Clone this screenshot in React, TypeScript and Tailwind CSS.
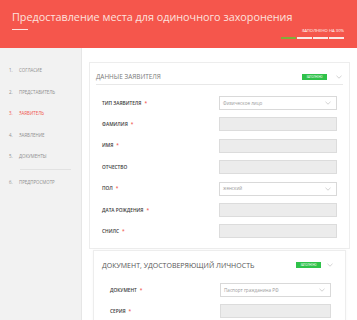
import React from "react";

const Chevron = ({ className = "" }: { className?: string }) => (
  <svg width="6" height="4" viewBox="0 0 6 4" className={className}>
    <path d="M0.5 0.8 L3 3.2 L5.5 0.8" fill="none" stroke="#b5b5b5" strokeWidth="0.6" />
  </svg>
);

const Badge = () => (
  <div className="w-[25px] h-[6px] bg-[#2fc24a] flex items-center justify-center text-white text-[2.6px] leading-none uppercase">
    заполнено
  </div>
);

type Row = { label: string; req?: boolean; kind: "select" | "input"; value?: string };

const rows1: Row[] = [
  { label: "Тип заявителя", req: true, kind: "select", value: "Физическое лицо" },
  { label: "Фамилия", req: true, kind: "input" },
  { label: "Имя", req: true, kind: "input" },
  { label: "Отчество", kind: "input" },
  { label: "Пол", req: true, kind: "select", value: "женский" },
  { label: "Дата рождения", req: true, kind: "input" },
  { label: "Снилс", req: true, kind: "input" },
];

const rows2: Row[] = [
  { label: "Документ", req: true, kind: "select", value: "Паспорт гражданина РФ" },
  { label: "Серия", req: true, kind: "input" },
];

const Field = ({ r, width }: { r: Row; width: string }) =>
  r.kind === "select" ? (
    <div className={`${width} h-[14px] bg-white border border-[#d9d9d9] flex items-center justify-between pl-[3px] pr-[5px]`}>
      <span className="text-[4.6px] text-[#9a9a9a] leading-none">{r.value}</span>
      <Chevron />
    </div>
  ) : (
    <div className={`${width} h-[14px] bg-[#ececec] border border-[#dcdcdc]`} />
  );

const RowView = ({ r, width, labelW }: { r: Row; width: string; labelW: string }) => (
  <div className="flex items-center h-[14px]">
    <div className={`${labelW} text-[4.8px] font-semibold uppercase text-[#3a3a3a] leading-none`}>
      {r.label}
      {r.req && <span className="text-[#f0544b] ml-[3px]">*</span>}
    </div>
    <Field r={r} width={width} />
  </div>
);

const side = [
  { n: "1.", t: "Согласие" },
  { n: "2.", t: "Представитель" },
  { n: "3.", t: "Заявитель", active: true },
  { n: "4.", t: "Заявление" },
  { n: "5.", t: "Документы" },
];

export default function App() {
  return (
    <div className="w-[357px] h-[320px] overflow-hidden bg-white" style={{ fontFamily: '"Open Sans", "Noto Sans", sans-serif' }}>
      <div className="h-[48px] bg-[#f5564c] relative px-[12px] pt-[9px]">
        <div className="text-[10.8px] leading-[16px] text-[#fde2de] whitespace-nowrap">
          Предоставление места для одиночного захоронения
        </div>
        <div className="w-[16px] h-[1px] bg-[#fde2de] mt-[4px]" />
        <div className="absolute right-[13px] top-[29px] flex flex-col items-end">
          <div className="text-[4.2px] leading-[4px] text-white uppercase whitespace-nowrap">Заполнено на 30%</div>
          <div className="flex gap-[1px] mt-[4px] h-[2px]">
            <div className="w-[15px] h-[2px] bg-[#7fae3a]" />
            <div className="w-[15px] h-[2px] bg-[#fbe9e6]" />
            <div className="w-[15px] h-[2px] bg-[#fbe9e6]" />
            <div className="w-[15px] h-[2px] bg-[#fbe9e6]" />
          </div>
        </div>
      </div>
      <div className="flex h-[272px]">
        <div className="w-[82px] bg-[#f2f2f2] border-r border-[#e6e6e6] pt-[12px]">
          <div className="flex flex-col">
            {side.map((s) => (
              <div
                key={s.n}
                className={`flex h-[21.4px] items-center text-[4.4px] uppercase leading-none ${s.active ? "text-[#f0544b]" : "text-[#8e8e8e]"}`}
              >
                <span className="w-[10px] pl-[9px] box-content">{s.n}</span>
                <span>{s.t}</span>
              </div>
            ))}
            <div className="h-[1px] bg-[#e2e2e2] ml-[20px] mr-[10px] mt-[2px]" />
            <div className="flex h-[25px] items-center text-[4.4px] uppercase leading-none text-[#8e8e8e]">
              <span className="w-[10px] pl-[9px] box-content">6.</span>
              <span>Предпросмотр</span>
            </div>
          </div>
        </div>
        <div className="flex-1 pl-[7px] pr-[7px] pt-[14px]">
          <div className="border border-[#ededed] h-[187px] px-[6px]">
            <div className="flex items-end justify-between h-[22px] pb-[4px] border-b border-[#e8e8e8]">
              <span className="text-[6.4px] uppercase text-[#7a7a7a] leading-none">Данные заявителя</span>
              <div className="flex items-center gap-[9px] pr-[1px]">
                <Badge />
                <Chevron />
              </div>
            </div>
            <div className="flex flex-col gap-[7.4px] pl-[6px] pt-[11px]">
              {rows1.map((r) => (
                <RowView key={r.label} r={r} width="w-[118px]" labelW="w-[117px]" />
              ))}
            </div>
          </div>
          <div className="border border-[#ededed] mx-[4px] mt-[1px] h-[80px] px-[8px] shadow-[0_0_3px_rgba(0,0,0,0.04)]">
            <div className="flex items-center justify-between h-[28px]">
              <span className="text-[7px] uppercase text-[#555] leading-none">Документ, удостоверяющий личность</span>
              <div className="flex items-center gap-[6px] pr-[4px]">
                <Badge />
                <Chevron />
              </div>
            </div>
            <div className="flex flex-col gap-[7.4px] pl-[8px] pt-[4px]">
              {rows2.map((r) => (
                <RowView key={r.label} r={r} width="w-[111px]" labelW="w-[110px]" />
              ))}
            </div>
          </div>
        </div>
      </div>
    </div>
  );
}
